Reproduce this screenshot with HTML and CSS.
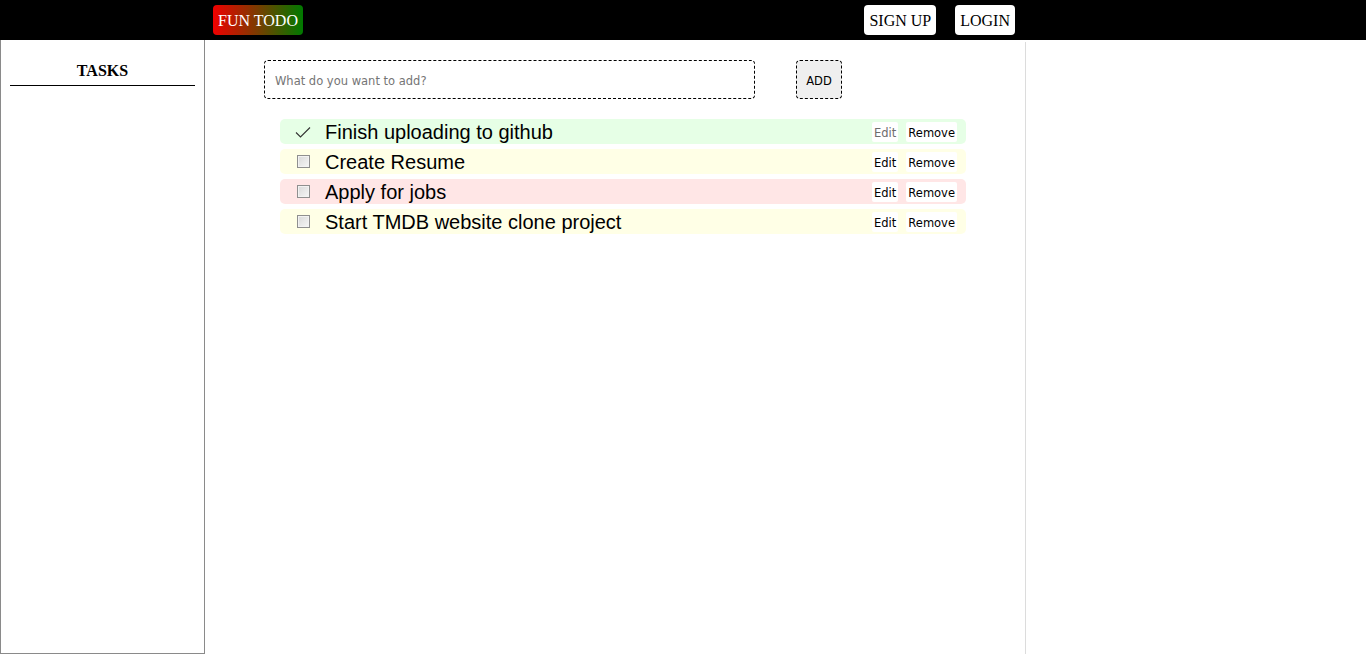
FILE: index.html
```html
<!DOCTYPE html>
<html>
<head>
<meta charset="utf-8">
<title>Fun Todo</title>
<link rel="stylesheet" href="styles.css">
</head>
<body>
<header class="topbar">
  <a class="logo">FUN TODO</a>
  <nav class="auth">
    <button class="auth-btn">SIGN UP</button>
    <button class="auth-btn">LOGIN</button>
  </nav>
</header>
<div class="layout">
  <aside class="sidebar">
    <h3 class="side-title">TASKS</h3>
  </aside>
  <main class="main">
    <form class="add-form">
      <input class="add-input" type="text" placeholder="What do you want to add?">
      <button class="add-btn" type="button">ADD</button>
    </form>
    <ul class="tasks">
      <li class="task task-done">
        <span class="mark check">
          <svg width="16" height="12" viewBox="0 0 16 12"><path d="M1 6.5 L5.5 11 L15 1.5" fill="none" stroke="#333" stroke-width="1.1"/></svg>
        </span>
        <span class="task-text">Finish uploading to github</span>
        <button class="tbtn tbtn-disabled">Edit</button>
        <button class="tbtn">Remove</button>
      </li>
      <li class="task task-mid">
        <span class="mark"><span class="box"></span></span>
        <span class="task-text">Create Resume</span>
        <button class="tbtn">Edit</button>
        <button class="tbtn">Remove</button>
      </li>
      <li class="task task-high">
        <span class="mark"><span class="box"></span></span>
        <span class="task-text">Apply for jobs</span>
        <button class="tbtn">Edit</button>
        <button class="tbtn">Remove</button>
      </li>
      <li class="task task-mid">
        <span class="mark"><span class="box"></span></span>
        <span class="task-text">Start TMDB website clone project</span>
        <button class="tbtn">Edit</button>
        <button class="tbtn">Remove</button>
      </li>
    </ul>
  </main>
</div>
</body>
</html>
```
FILE: styles.css
```css
* { box-sizing: border-box; }
html, body { margin: 0; padding: 0; background: #fff; }
body { font-family: "Liberation Serif", "Times New Roman", serif; height: 654px; overflow: hidden; }

.topbar {
  height: 40px;
  background: #000;
  display: flex;
  align-items: center;
  padding-left: 213px;
  padding-right: 351px;
}
.logo {
  height: 30px;
  width: 90px;
  display: flex;
  align-items: center;
  justify-content: center;
  padding-top: 1px;
  border-radius: 4px;
  background: linear-gradient(90deg, #f00000, #007a00);
  color: #fff;
  font-size: 16px;
}
.auth { margin-left: auto; display: flex; gap: 19px; }
.auth-btn {
  height: 30px;
  padding: 2px 5px 0;
  border: none;
  border-radius: 4px;
  background: #fff;
  color: #000;
  font-family: "Liberation Serif", serif;
  font-size: 16px;
}

.layout { display: flex; height: 614px; }
.sidebar {
  width: 205px;
  border: 1px solid #8a8a8a;
  border-top: none;
  padding: 0 9px;
}
.side-title {
  margin: 22px 0 0;
  padding-bottom: 5px;
  border-bottom: 1px solid #000;
  text-align: center;
  font-size: 16px;
  font-weight: bold;
}
.main {
  width: 821px;
  border-right: 1px solid #dcdcdc;
  margin-top: 2px;
  padding: 18px 0 0 59px;
}
.add-form { display: flex; align-items: center; }
.add-input {
  width: 491px;
  height: 39px;
  border: 1px dashed #000;
  border-radius: 4px;
  padding: 2px 10px 0;
  font-family: "DejaVu Sans", Tahoma, sans-serif;
  font-size: 11.5px;
  outline: none;
}
.add-input::placeholder { color: #757575; }
.add-btn {
  margin-left: 41px;
  width: 46px;
  height: 39px;
  background: #efefef;
  border: 1px dashed #000;
  border-radius: 4px;
  font-family: "DejaVu Sans", Tahoma, sans-serif;
  font-size: 11.5px;
  color: #000;
  padding: 2px 0 0;
}

.tasks {
  list-style: none;
  margin: 20px 0 0 16px;
  padding: 0;
  width: 686px;
  display: flex;
  flex-direction: column;
  gap: 5px;
}
.task {
  height: 25px;
  border-radius: 5px;
  display: flex;
  align-items: center;
  padding-right: 9px;
}
.task-done { background: #e6ffe6; }
.task-mid { background: #ffffe6; }
.task-high { background: #ffe6e6; }
.mark {
  width: 45px;
  display: flex;
  justify-content: flex-start;
  padding-left: 17px;
  align-items: center;
}
.check { padding-left: 15px; }
.box {
  width: 13px;
  height: 13px;
  border: 1px solid #8f8f8f;
  background: linear-gradient(135deg, #d8d8d8, #f6f6f6);
  box-shadow: inset 0 0 0 1px #f2f2f2;
}
.task-text {
  flex: 1;
  padding-top: 2px;
  font-family: "Liberation Sans", Arial, sans-serif;
  font-size: 20px;
  color: #000;
}
.tbtn {
  height: 20px;
  background: #fff;
  border: none;
  border-radius: 2px;
  padding: 2px 2px 0;
  margin-left: 8px;
  font-family: "DejaVu Sans", Tahoma, sans-serif;
  font-size: 11.5px;
  color: #000;
}
.tbtn-disabled { color: #6d6d6d; }
```
